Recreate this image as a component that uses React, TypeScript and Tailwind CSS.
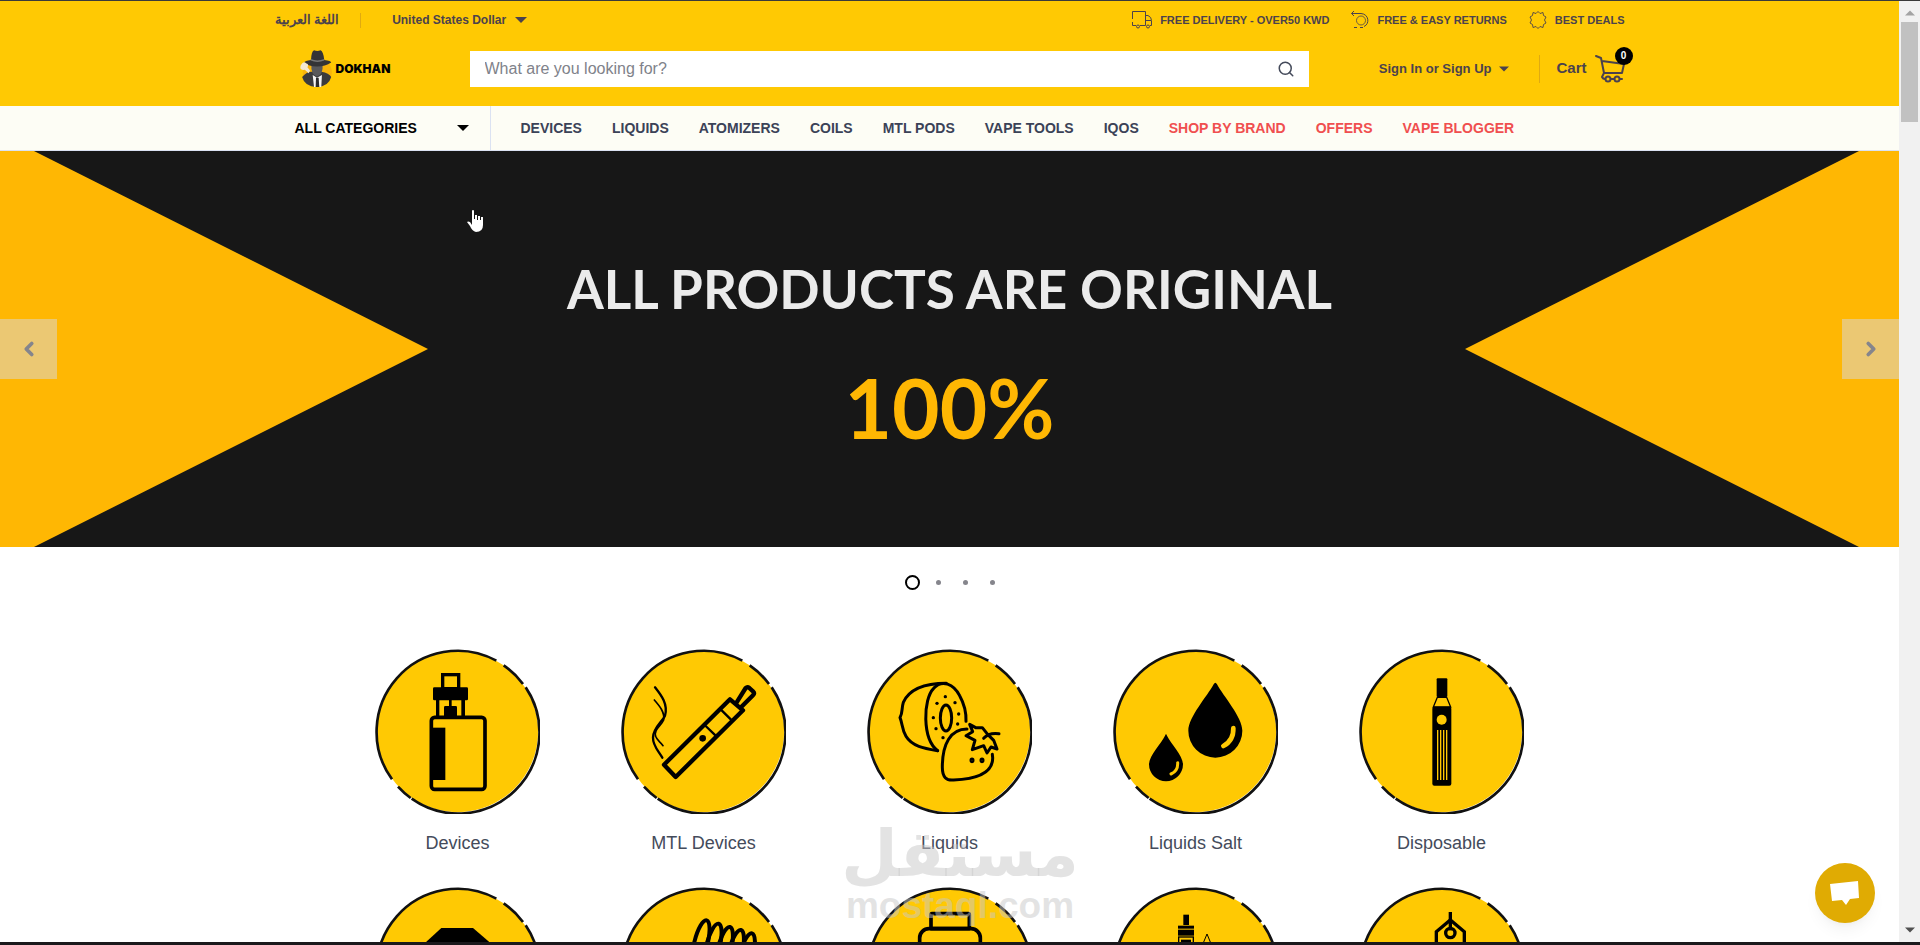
import { useState } from "react";
import type { ReactNode } from "react";
import { ChevronLeft, ChevronRight, Search } from "lucide-react";

interface NavLink {
  label: string;
  highlight?: boolean;
}

interface Category {
  name: string;
  art: ReactNode;
}

const NAV_LINKS: NavLink[] = [
  { label: "DEVICES" },
  { label: "LIQUIDS" },
  { label: "ATOMIZERS" },
  { label: "COILS" },
  { label: "MTL PODS" },
  { label: "VAPE TOOLS" },
  { label: "IQOS" },
  { label: "SHOP BY BRAND", highlight: true },
  { label: "OFFERS", highlight: true },
  { label: "VAPE BLOGGER", highlight: true },
];

const KIWI_SEEDS = [
  [235, 143],
  [264, 161],
  [275, 195],
  [272, 225],
  [210, 163],
  [199, 206],
  [207, 239],
  [228, 266],
];

const CATEGORIES: Category[] = [
  {
    name: "Devices",
    art: (
      <>
        <rect x="203" y="77" width="48" height="42" fill="none" stroke="#000" strokeWidth="10" />
        <rect x="174" y="115" width="105" height="39" rx="4" />
        <rect x="183" y="153" width="10" height="50" />
        <rect x="259" y="153" width="11" height="50" />
        <rect x="222" y="153" width="8" height="22" />
        <rect x="207" y="171" width="39" height="32" rx="4" />
        <rect x="169" y="205" width="161" height="216" rx="10" fill="none" stroke="#000" strokeWidth="11" />
        <rect x="167" y="236" width="44" height="157" />
      </>
    ),
  },
  {
    name: "MTL Devices",
    art: (
      <g fill="none" stroke="#000" strokeLinejoin="round" strokeLinecap="round">
        <path d="M129 347 L327 151 L366 184 L164 384 Z" strokeWidth="13" />
        <path d="M347 160 L374 117 Q379 112 385 117 L396 127 Q402 133 396 139 L360 175" strokeWidth="13" />
        <path d="M302 184 L330 212 M254 231 L284 260" strokeWidth="7" />
        <circle cx="245" cy="268" r="10" fill="#000" stroke="none" />
        <path d="M102 115 C120 138 142 165 132 200 C124 218 98 235 96 265 C95 290 112 305 124 326" strokeWidth="7" />
        <path d="M100 153 C115 170 132 190 128 213 C120 232 98 240 104 262 C108 275 118 278 126 290" strokeWidth="5" />
      </g>
    ),
  },
  {
    name: "Liquids",
    art: (
      <g fill="none" stroke="#000" strokeWidth="9" strokeLinejoin="round" strokeLinecap="round">
        <path d="M238 103 C180 103 130 115 109 160 C103 180 108 188 99 206 C107 225 104 240 117 262 C135 292 170 298 212 305" />
        <path d="M212 305 C165 270 168 150 200 118 C225 90 260 105 278 140 C292 165 298 190 297 217" />
        <ellipse cx="237" cy="207" rx="17" ry="39" />
        <path d="M300 240 C250 240 226 285 226 355 C226 385 238 395 260 393 C330 390 378 370 377 326 L376 316" />
        <path d="M308 226 L326 236 L346 236 L362 256 L380 274 L390 300 L372 294 L360 312 L350 290 L316 302 L324 274 L297 260 L317 248 Z" />
        <path d="M350 268 C364 252 382 252 396 254" />
        <ellipse cx="315" cy="334" rx="3" ry="4" />
        <ellipse cx="345" cy="334" rx="3" ry="4" />
        {KIWI_SEEDS.map(([x, y]) => (
          <circle key={`${x}-${y}`} cx={x} cy={y} r="5" fill="#000" stroke="none" />
        ))}
      </g>
    ),
  },
  {
    name: "Liquids Salt",
    art: (
      <>
        <path d="M302 106 Q307 96 312 106 C330 140 388 205 388 245 A81 81 0 0 1 226 245 C226 205 284 140 302 106 Z" />
        <path d="M156 260 Q159 252 162 260 C173 283 210 320 210 346 A51 51 0 0 1 108 346 C108 320 145 283 156 260 Z" />
        <g fill="none" stroke="#ffc903" strokeLinecap="round">
          <path d="M361 237 C362 265 352 280 331 291" strokeWidth="14" />
          <path d="M194 341 C195 358 188 369 174 375" strokeWidth="9" />
        </g>
      </>
    ),
  },
  {
    name: "Disposable",
    art: (
      <>
        <rect x="233" y="88" width="32" height="56" rx="3" />
        <path d="M235 145 L263 145 L275 174 L223 174 Z" fill="none" stroke="#000" strokeWidth="4" />
        <rect x="220" y="173" width="57" height="237" rx="6" />
        <circle cx="248" cy="212" r="15" fill="#ffc903" />
        <path d="M236 243 V393 M245 243 V393 M254 243 V393 M263 243 V393" stroke="#ffc903" strokeWidth="4" />
      </>
    ),
  },
  {
    name: "Pods",
    art: <path d="M154 164 L199 123 H294 L342 164 V330 H154 Z" />,
  },
  {
    name: "Coils",
    art: (
      <g fill="none" stroke="#000" strokeWidth="12">
        <ellipse cx="240" cy="168" rx="20" ry="70" transform="rotate(14 240 168)" />
        <ellipse cx="276" cy="178" rx="20" ry="70" transform="rotate(14 276 178)" />
        <ellipse cx="310" cy="188" rx="20" ry="70" transform="rotate(14 310 188)" />
        <ellipse cx="343" cy="197" rx="20" ry="70" transform="rotate(14 343 197)" />
        <ellipse cx="376" cy="207" rx="20" ry="70" transform="rotate(14 376 207)" />
      </g>
    ),
  },
  {
    name: "Nicotine",
    art: (
      <g fill="none" stroke="#000" strokeWidth="11">
        <rect x="192" y="80" width="115" height="45" rx="3" />
        <rect x="158" y="125" width="182" height="260" rx="28" />
      </g>
    ),
  },
  {
    name: "Atomizers",
    art: (
      <>
        <rect x="211" y="83" width="17" height="31" />
        <rect x="195" y="116" width="48" height="9" />
        <rect x="195" y="128" width="48" height="18" />
        <rect x="197" y="150" width="44" height="120" fill="none" stroke="#000" strokeWidth="4" />
        <rect x="204" y="158" width="30" height="112" />
        <path d="M270 170 L282 141 L294 170" fill="none" stroke="#000" strokeWidth="3" />
      </>
    ),
  },
  {
    name: "Offers",
    art: (
      <g fill="none" stroke="#000" strokeWidth="10">
        <path d="M232 330 V134 L274 99 L316 134 V330 Z" />
        <circle cx="274" cy="138" r="14" />
        <path d="M274 75 V130" />
      </g>
    ),
  },
];

function Caret({ className = "w-3" }: { className?: string }) {
  return (
    <svg viewBox="0 0 12 6" className={`h-[6px] ${className}`} fill="currentColor" aria-hidden="true">
      <path d="M0 0 H12 L6 6 Z" />
    </svg>
  );
}

function Logo() {
  return (
    <svg viewBox="0 0 96 112" className="h-[37px] w-8" aria-hidden="true">
      <circle cx="52" cy="68" r="44" fill="#f9b50b" />
      <path d="M6 82 Q20 66 34 66 L64 66 Q88 70 94 82 Q86 112 50 112 Q14 112 6 82 Z" fill="#3b3b3d" />
      <path d="M34 46 H68 Q70 74 51 80 Q32 74 34 46 Z" fill="#59595b" />
      <path d="M38 76 L51 84 L66 76 L64 112 H42 Z" fill="#f5f5f5" />
      <path d="M48 84 H56 L58 112 H47 Z" fill="#2b2b2d" />
      <path d="M33 30 Q34 4 42 1 Q52 5 62 1 Q70 4 73 30 Q94 32 94 38 Q76 50 52 50 Q24 50 12 38 Q14 32 33 30 Z" fill="#343436" />
      <path d="M32 27 Q52 36 73 27 V32 Q52 40 32 32 Z" fill="#777" />
      <path d="M2 46 Q10 32 18 40 Q28 42 22 52 L30 62 L26 70 L14 60 Q-4 62 2 46 Z" fill="#f4ead2" />
    </svg>
  );
}

function TruckIcon() {
  return (
    <svg viewBox="0 0 20 18" className="h-[18px] w-5" fill="none" stroke="currentColor" aria-hidden="true">
      <path d="M.5 8 V.5 H13.5 V14.5 H8 M.5 11 V14.5 H4 M13.5 4.5 H16 Q19.5 6 19.5 9.5 V14.5 H18 M13.5 9.5 H19" />
      <circle cx="6" cy="15.5" r="1.5" />
      <circle cx="16" cy="15.5" r="1.5" />
    </svg>
  );
}

function ReturnIcon() {
  return (
    <svg viewBox="0 0 18 18" className="size-[18px]" fill="none" stroke="currentColor" aria-hidden="true">
      <path d="M3 0 L.5 2.5 L3 5 M.5 2.5 H10 C18 3 19 13 13 15.5 M9 16.5 H12 M3 16.5 H6" />
      <circle cx="10" cy="9.5" r="4.5" strokeWidth=".8" />
    </svg>
  );
}

function BadgeIcon() {
  return (
    <svg viewBox="0 0 18 18" className="size-[18px]" fill="none" stroke="currentColor" strokeWidth=".9" aria-hidden="true">
      <path d="M9 .5 L11 2.5 L14 1.5 L14.5 4.5 L17 6 L15.5 9 L17 12 L14.5 13.5 L14 16.5 L11 15.5 L9 17.5 L7 15.5 L4 16.5 L3.5 13.5 L1 12 L2.5 9 L1 6 L3.5 4.5 L4 1.5 L7 2.5 Z" />
    </svg>
  );
}

function CartIcon() {
  return (
    <svg
      viewBox="0 0 30 28"
      className="h-7 w-[30px]"
      fill="none"
      stroke="currentColor"
      strokeWidth="2"
      strokeLinejoin="round"
      strokeLinecap="round"
      aria-hidden="true"
    >
      <path d="M1 1 L6 3 L9 18 H27 L29 9 L7 6 M9 18 L7 22 Q8 24 10 24 M25 24 H27" />
      <circle cx="13" cy="24" r="2.5" />
      <circle cx="22" cy="24" r="2.5" />
      <path d="M16 24 H19" />
    </svg>
  );
}

function TopBar() {
  return (
    <div className="flex h-[38px] items-center justify-between text-[#4b424d]">
      <div className="flex items-center">
        <a href="#ar" lang="ar" dir="rtl" className="text-[13px] font-bold whitespace-nowrap">
          اللغة العربية
        </a>
        <span className="mx-[21px] h-[15px] w-px bg-[#e0aa10]" />
        <div className="ml-[10px] flex items-center">
          <select
            aria-label="Currency"
            className="appearance-none bg-transparent text-xs leading-5 font-bold"
            defaultValue="usd"
          >
            <option value="usd">United States Dollar</option>
          </select>
          <Caret className="ml-2 w-3" />
        </div>
      </div>
      <ul className="flex items-center gap-[22px] text-[11px] font-bold">
        <li className="flex items-center gap-2">
          <TruckIcon />
          FREE DELIVERY - OVER50 KWD
        </li>
        <li className="flex items-center gap-2">
          <ReturnIcon />
          FREE &amp; EASY RETURNS
        </li>
        <li className="flex items-center gap-2">
          <BadgeIcon />
          BEST DEALS
        </li>
      </ul>
    </div>
  );
}

function SearchBar() {
  return (
    <div className="flex items-center pt-[11px] pb-[19px] text-[#4b424d]">
      <a href="#home" className="ml-[25px] flex w-[170px] items-center gap-1 font-['Inter',sans-serif] text-xs font-black text-black">
        <Logo />
        DOKHAN
      </a>
      <form className="flex h-9 flex-1 items-center bg-white" onSubmit={(e) => e.preventDefault()}>
        <input
          type="search"
          aria-label="Search products"
          placeholder="What are you looking for?"
          className="h-full flex-1 px-[15px] text-base outline-none placeholder:text-[#80828a]"
        />
        <button type="submit" aria-label="Search" className="mr-[14px] text-[#444a5a]">
          <Search size={18} strokeWidth={2} />
        </button>
      </form>
      <button className="ml-[70px] flex items-center gap-2 text-[13px] font-bold">
        Sign In or Sign Up
        <Caret className="w-[10px]" />
      </button>
      <span className="mr-4 ml-[30px] h-7 w-px bg-[#e0aa10]" />
      <a href="#cart" className="relative flex items-center gap-2 text-[15px] font-bold">
        Cart
        <CartIcon />
        <span className="absolute -top-2 -right-2 flex size-[18px] items-center justify-center rounded-full bg-black text-[10px] text-white">
          0
        </span>
      </a>
    </div>
  );
}

function NavBar() {
  return (
    <nav className="border-b border-[#dbe2f2] bg-[#fdfdf5]">
      <div className="mx-auto flex h-11 w-full max-w-[1350px] text-sm font-bold whitespace-nowrap text-[#3b4257]">
        <button className="flex w-[216px] items-center justify-between border-r border-[#dbe2f2] pr-[21px] pl-5 text-black">
          ALL CATEGORIES
          <Caret />
        </button>
        <ul className="flex items-center gap-[30px] pl-[30px]">
          {NAV_LINKS.map((link) => (
            <li key={link.label}>
              <a href="#shop" className={link.highlight ? "text-[#f04f4f]" : ""}>
                {link.label}
              </a>
            </li>
          ))}
        </ul>
      </div>
    </nav>
  );
}

function Hero() {
  const [slide, setSlide] = useState(0);
  const step = (by: number) => setSlide((s) => (s + by + 4) % 4);

  return (
    <section>
      <div className="relative flex h-[396px] items-center justify-between bg-[#171717]">
        <svg viewBox="0 0 1899 396" preserveAspectRatio="none" className="absolute inset-0 h-full w-full" aria-hidden="true">
          <path d="M0 0 H34 L428 198 L34 396 H0 Z M1899 0 H1859 L1465 198 L1859 396 H1899 Z" fill="#ffb703" />
        </svg>
        <button
          onClick={() => step(-1)}
          aria-label="Previous slide"
          className="relative flex h-[60px] w-[57px] items-center justify-center bg-[#ebc873] text-[#85858c]"
        >
          <ChevronLeft size={22} strokeWidth={4} />
        </button>
        <div className="relative pt-3 text-center font-['Lato',sans-serif] font-bold whitespace-nowrap">
          <h1 className="text-[53px] leading-[60px] text-[#ebebeb]">ALL PRODUCTS ARE ORIGINAL</h1>
          <p className="mt-11 text-[82px] leading-[88px] text-[#ffb703]">100%</p>
        </div>
        <button
          onClick={() => step(1)}
          aria-label="Next slide"
          className="relative flex h-[60px] w-[57px] items-center justify-center bg-[#ebc873] text-[#85858c]"
        >
          <ChevronRight size={22} strokeWidth={4} />
        </button>
      </div>
      <div className="flex h-[70px] items-center justify-center gap-[22px]">
        {[0, 1, 2, 3].map((i) => (
          <button
            key={i}
            onClick={() => setSlide(i)}
            aria-label={`Slide ${i + 1}`}
            className={
              i === slide
                ? "-mr-1.5 size-[15px] rounded-full border-2 border-black"
                : "size-[5px] rounded-full bg-[#85858c]"
            }
          />
        ))}
      </div>
    </section>
  );
}

function CategoryCard({ name, art }: Category) {
  return (
    <a href="#category" className="flex flex-col items-center gap-4 text-lg leading-[27px] text-[#444b5b]">
      <svg viewBox="0 0 495 495" className="size-[165px]" aria-hidden="true">
        <circle cx="247.5" cy="247.5" r="242" fill="#ffc903" />
        <path
          d="M452 115 A243 243 0 0 1 110 449 M107 447 A243 243 0 0 1 69 413 M51 391 A243 243 0 0 1 364 35 M386 49 A243 243 0 0 1 444 105"
          fill="none"
          stroke="#111"
          strokeWidth="8"
        />
        {art}
      </svg>
      {name}
    </a>
  );
}

function Watermark() {
  return (
    <div className="pointer-events-none absolute bottom-[18px] left-[845px] flex w-[230px] flex-col items-center font-bold text-[#c8c8c8]/50">
      <span lang="ar" className="font-['DejaVu_Sans',sans-serif] text-[65px] leading-[68px]">
        مستقل
      </span>
      <span className="text-[37px] leading-9">mostaql.com</span>
    </div>
  );
}

function ScrollTrack() {
  return (
    <div className="flex w-[21px] flex-col items-center bg-[#f1f1f1] py-[9px] text-[#505050]" aria-hidden="true">
      <Caret className="w-[10px] rotate-180 text-[#a3a3a3]" />
      <div className="mt-[6px] h-[100px] w-[17px] bg-[#c1c1c1]" />
      <Caret className="mt-auto w-[10px]" />
    </div>
  );
}

export default function App() {
  return (
    <div className="flex h-screen border-t border-b-[3px] border-t-[#3a3a3a] border-b-[#1b191c] bg-white font-['Liberation_Sans',Arial,sans-serif]">
      <div className="relative min-w-0 flex-1 overflow-hidden">
        <header>
          <div className="bg-[#ffc903]">
            <div className="mx-auto w-full max-w-[1350px]">
              <TopBar />
              <SearchBar />
            </div>
          </div>
          <NavBar />
        </header>
        <main>
          <Hero />
          <div className="mx-auto grid w-full max-w-[1230px] grid-cols-5 gap-y-[30px] pt-8">
            {CATEGORIES.map((category) => (
              <CategoryCard key={category.name} {...category} />
            ))}
          </div>
        </main>
        <Watermark />
        <button
          aria-label="Open chat"
          className="absolute right-6 bottom-[19px] flex size-[60px] items-center justify-center rounded-full bg-[#e0ab03] shadow-lg shadow-black/5"
        >
          <svg viewBox="0 0 30 26" className="h-[26px] w-[30px]" fill="#fff" aria-hidden="true">
            <path d="M0 4 L28 1 L29 18 L20 19 L16 25 L12 20 L2 21 Z" />
          </svg>
        </button>
        {/* hand pointer resting on the banner */}
        <svg viewBox="0 0 16 22" className="pointer-events-none absolute top-[209px] left-[467px] h-[22px] w-4" fill="#fff" aria-hidden="true">
          <path d="M5 1 Q5 0 6 0 Q7 0 7 1 V9 H8 V5 H10 V10 H11 V6 H13 V10 H14 V7 H16 V15 Q16 22 9 22 Q5 21 3 16 L0 12 Q1 11 3 12 L5 15 Z" />
        </svg>
      </div>
      <ScrollTrack />
    </div>
  );
}
